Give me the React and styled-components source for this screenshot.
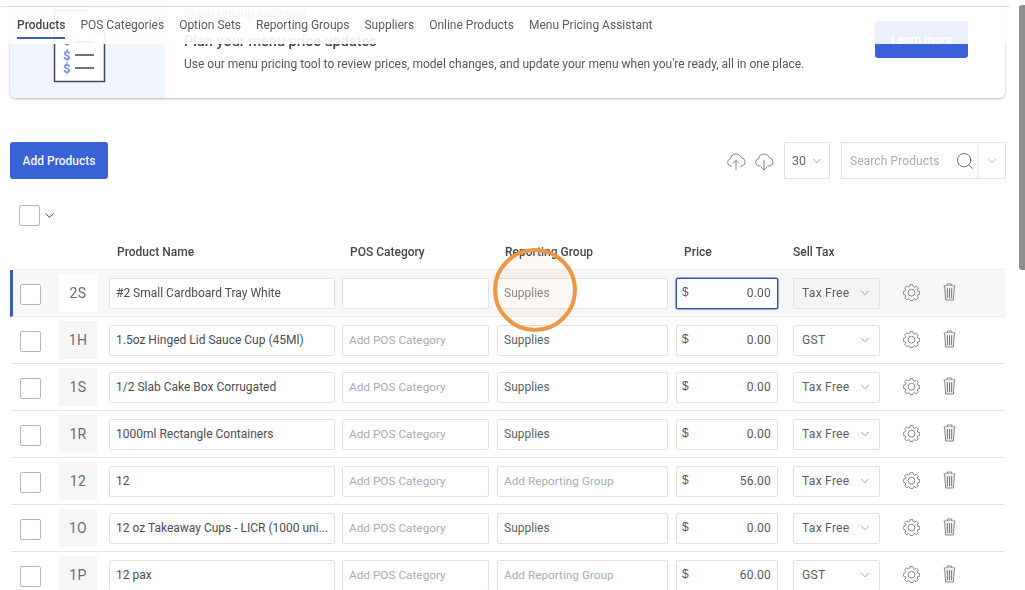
import styled, { createGlobalStyle } from "styled-components";
import { ChevronDown, Search } from "lucide-react";

const GlobalStyle = createGlobalStyle`
  html, body {
    margin: 0;
    padding: 0;
    background: #fff;
  }
  * {
    box-sizing: border-box;
  }
`;

const tabs = [
  "Products",
  "POS Categories",
  "Option Sets",
  "Reporting Groups",
  "Suppliers",
  "Online Products",
  "Menu Pricing Assistant",
];

const products = [
  { code: "2S", name: "#2 Small Cardboard Tray White", group: "Supplies", price: "0.00", tax: "Tax Free", active: true },
  { code: "1H", name: "1.5oz Hinged Lid Sauce Cup (45Ml)", group: "Supplies", price: "0.00", tax: "GST" },
  { code: "1S", name: "1/2 Slab Cake Box Corrugated", group: "Supplies", price: "0.00", tax: "Tax Free" },
  { code: "1R", name: "1000ml Rectangle Containers", group: "Supplies", price: "0.00", tax: "Tax Free" },
  { code: "12", name: "12", group: "", price: "56.00", tax: "Tax Free" },
  { code: "1O", name: "12 oz Takeaway Cups - LICR (1000 uni...", group: "Supplies", price: "0.00", tax: "Tax Free" },
  { code: "1P", name: "12 pax", group: "", price: "60.00", tax: "GST" },
];

const Page = styled.div`
  position: relative;
  width: 1025px;
  height: 590px;
  overflow: hidden;
  font-family: Roboto, "Liberation Sans", sans-serif;
  font-size: 12px;
  color: #4b4d52;
  filter: blur(0.3px);
`;

const TopLine = styled.div`
  height: 7px;
  width: 1010px;
  border-bottom: 1px solid #e4e4e4;
`;

const TabBar = styled.nav`
  position: absolute;
  top: 7px;
  left: 0;
  width: 1010px;
  height: 37px;
  padding-left: 17px;
  display: flex;
  gap: 15px;
  background: rgba(255, 255, 255, 0.9);
`;

const Tab = styled.a`
  height: 32px;
  line-height: 36px;
  white-space: nowrap;
  font-size: 12px;
  color: ${(p) => (p.$active ? "#44474d" : "#5a5c61")};
  font-weight: ${(p) => (p.$active ? 500 : 400)};
  border-bottom: 2px solid ${(p) => (p.$active ? "#3a5fb5" : "transparent")};
`;

const Banner = styled.section`
  margin-left: 10px;
  width: 995px;
  height: 91px;
  display: flex;
  border-radius: 0 0 6px 6px;
  background: #fff;
  box-shadow: 0 1px 3px rgba(0, 0, 0, 0.28);
  overflow: hidden;
`;

const BannerArt = styled.div`
  width: 155px;
  background: #f1f5fe;
  flex: none;
`;

const BannerText = styled.div`
  margin-left: 19px;
  width: 691px;
`;

const BannerKicker = styled.div`
  font-size: 12px;
  line-height: 14px;
  color: #9aa7c8;
  font-weight: 500;
`;

const BannerTitle = styled.div`
  margin-top: 11px;
  font-size: 14.5px;
  line-height: 20px;
  font-weight: 500;
  color: #3f4147;
`;

const BannerCopy = styled.div`
  margin-top: 4px;
  font-size: 12px;
  line-height: 16px;
  color: #55575c;
`;

const LearnButton = styled.button`
  margin-top: 14px;
  width: 93px;
  height: 37px;
  border: 0;
  border-radius: 3px;
  background: #3a62d7;
  color: #fff;
  font: 500 12px Roboto, sans-serif;
`;

const Toolbar = styled.div`
  margin: 44px 0 0 10px;
  width: 996px;
  height: 37px;
  display: flex;
  align-items: center;
`;

const AddButton = styled.button`
  width: 98px;
  height: 37px;
  border: 0;
  border-radius: 3px;
  background: #3a62d7;
  color: #f4f6fd;
  font: 500 12px Roboto, sans-serif;
`;

const ToolIcons = styled.div`
  margin-left: auto;
  display: flex;
  gap: 8px;
  color: #77797d;
`;

const PageSize = styled.div`
  margin-left: 10px;
  width: 46px;
  height: 37px;
  display: flex;
  align-items: center;
  padding-left: 7px;
  gap: 4px;
  border: 1px solid #e3e3e3;
  font-size: 12.5px;
  color: #66686c;
`;

const SearchBox = styled.div`
  margin-left: 11px;
  width: 165px;
  height: 37px;
  display: flex;
  border: 1px solid #e3e3e3;
`;

const SearchField = styled.div`
  flex: 1;
  display: flex;
  align-items: center;
  justify-content: space-between;
  padding: 0 2px 0 8px;
  color: #a9acb2;
  font-size: 12px;
  letter-spacing: 0.1px;
  border-right: 2px solid #efefef;
`;

const SearchCaret = styled.div`
  width: 26px;
  display: flex;
  align-items: center;
  justify-content: center;
  color: #77797d;
`;

const SelectAll = styled.div`
  margin: 26px 0 0 19px;
  display: flex;
  align-items: center;
  gap: 2px;
  color: #44474d;
`;

const CheckBox = styled.span`
  display: block;
  flex: none;
  width: 21px;
  height: 21px;
  margin-top: ${(p) => (p.$inRow ? 2 : 0)}px;
  background: #fff;
  border: 1px solid #b4b6b9;
  border-radius: 2px;
`;

const HeaderRow = styled.div`
  margin: 14px 0 0 10px;
  height: 30px;
  display: flex;
  line-height: 24px;
  font-size: 12px;
  font-weight: 500;
  color: #45474c;
`;

const HeaderCell = styled.div`
  width: ${(p) => p.$w}px;
  flex: none;
`;

const Row = styled.div`
  margin-left: 10px;
  width: 995px;
  height: 47px;
  display: flex;
  align-items: center;
  padding-left: 7px;
  border-left: 3px solid ${(p) => (p.$active ? "#3a5fb5" : "transparent")};
  border-bottom: 1px solid ${(p) => (p.$active ? "#ececec" : "#e2e2e2")};
  background: ${(p) => (p.$active ? "#f7f7f7" : "#fff")};
  box-shadow: ${(p) => (p.$active ? "0 -1px 0 #f0f0f0" : "none")};
`;

const CodeBox = styled.div`
  margin-left: 18px;
  width: 38px;
  height: 38px;
  flex: none;
  display: flex;
  align-items: center;
  justify-content: center;
  font-size: 14px;
  letter-spacing: 0.3px;
  color: #6a6c70;
  background: ${(p) => (p.$active ? "#fff" : "#f6f6f6")};
`;

const TextField = styled.input`
  width: ${(p) => p.$w}px;
  margin-left: ${(p) => p.$gap}px;
  height: 31px;
  flex: none;
  padding: 0 6px;
  background: #fff;
  border: 1px solid #e2e2e2;
  border-radius: 2px;
  outline: none;
  font: 12px Roboto, sans-serif;
  color: ${(p) => p.$tone || "#4b4d52"};
  &::placeholder {
    color: #a9acb2;
    font-size: 11.8px;
    opacity: 1;
  }
`;

const PriceField = styled.div`
  margin-left: 8px;
  width: 102px;
  height: 31px;
  flex: none;
  display: flex;
  align-items: center;
  justify-content: space-between;
  padding: 0 6px 0 5px;
  background: #fff;
  border: 1px solid ${(p) => (p.$active ? "#32589f" : "#e2e2e2")};
  box-shadow: ${(p) => (p.$active ? "0 0 0 0.5px #32589f" : "none")};
  border-radius: 2px;
  font-size: 12px;
  letter-spacing: 0.2px;
  color: #55575c;
`;

const Dollar = styled.span`
  font-family: "Liberation Sans", sans-serif;
  font-size: 12px;
  margin-top: -3px;
`;

const TaxSelect = styled.div`
  margin-left: 15px;
  width: 87px;
  height: 31px;
  flex: none;
  display: flex;
  align-items: center;
  justify-content: space-between;
  padding: 0 7px 1px 8px;
  border: 1px solid #e2e2e2;
  border-radius: 2px;
  background: ${(p) => (p.$active ? "#f4f4f4" : "#fff")};
  font-size: 12.2px;
  letter-spacing: 0.2px;
  color: #5d5f63;
`;

const RowIcons = styled.div`
  margin: 0 0 2px 23px;
  display: flex;
  align-items: center;
  gap: 23px;
  color: #77797d;
`;

const Highlight = styled.div`
  position: absolute;
  left: 493px;
  top: 248px;
  width: 84px;
  height: 84px;
  border-radius: 50%;
  border: 4px solid #ee9646;
  background: rgba(240, 150, 70, 0.06);
`;

const Scrollbar = styled.div`
  position: absolute;
  right: 0;
  top: 5px;
  width: 6px;
  height: 265px;
  border-radius: 3px 0 0 3px;
  background: #8e8e8e;
`;

const MenuArt = () => (
  <svg width="155" height="91" viewBox="0 0 155 91">
    <rect x="44.5" y="3.5" width="50" height="71" fill="#fff" stroke="#46484c" strokeWidth="1.5" />
    <rect x="77.5" y="0.5" width="33" height="25" fill="#fff" stroke="#c9ccd2" />
    <path d="M65 35h19M65 48h19M65 61h19" stroke="#44464a" strokeWidth="1.6" />
    <text x="53" y="38" fontSize="13" fontWeight="700" fill="#6f8ede" fontFamily="Roboto">$</text>
    <text x="53" y="53" fontSize="13" fontWeight="700" fill="#6f8ede" fontFamily="Roboto">$</text>
    <text x="53" y="66" fontSize="13" fontWeight="700" fill="#6f8ede" fontFamily="Roboto">$</text>
  </svg>
);

const CloudUp = () => (
  <svg width="20" height="20" viewBox="0 0 20 20" fill="none" stroke="currentColor" strokeWidth="0.9">
    <path d="M6 15H5a3.6 3.6 0 0 1-.6-7.1A5.6 5.6 0 0 1 15.2 6.6 4.3 4.3 0 0 1 16 15h-2" />
    <path d="M10 19V9.5M6.8 12.5 10 9.3l3.2 3.2" />
  </svg>
);

const CloudDown = () => (
  <svg width="20" height="20" viewBox="0 0 20 20" fill="none" stroke="currentColor" strokeWidth="0.9">
    <path d="M6.5 15H5a3.6 3.6 0 0 1-.6-7.1A5.6 5.6 0 0 1 15.2 6.6 4.3 4.3 0 0 1 16 15h-2.5" />
    <path d="M10 9v10M6.8 15.8 10 19l3.2-3.2" />
  </svg>
);

const GearIcon = () => (
  <svg width="17" height="17" viewBox="0 0 19 19" fill="none" stroke="currentColor" strokeWidth="1">
    <path d="M7.9 1.2h3.2l.5 2.2 1.3.6 2-1.2 2.2 2.3-1.2 1.9.6 1.4 2.2.5v3.1l-2.2.5-.6 1.4 1.2 1.9-2.2 2.2-2-1.2-1.3.6-.5 1.4H7.9l-.5-1.4-1.3-.6-2 1.2-2.2-2.2 1.2-1.9-.6-1.4L.3 11.7V8.6l2.2-.5.6-1.4-1.2-1.9 2.2-2.3 2 1.2 1.3-.6z" transform="translate(0 -.4)" />
    <circle cx="9.5" cy="9.7" r="3.8" />
  </svg>
);

const TrashIcon = () => (
  <svg width="13" height="18" viewBox="0 0 13 18" fill="none" stroke="currentColor" strokeWidth="0.9">
    <path d="M.5 3h12M4.2 3V1h4.6v2" />
    <path d="M1.6 3l1 14h7.8l1-14" fill="#efefef" />
    <path d="M4.4 5.2v10M6.5 5.2v10M8.6 5.2v10" strokeWidth="1" />
  </svg>
);

const ProductRow = ({ item }) => (
  <Row $active={item.active}>
    <CheckBox $inRow />
    <CodeBox $active={item.active}>{item.code}</CodeBox>
    <TextField $w={226} $gap={12} readOnly value={item.name} />
    <TextField $w={147} $gap={7} readOnly placeholder={item.active ? "" : "Add POS Category"} value="" />
    <TextField
      $w={171}
      $gap={8}
      $tone={item.active ? "#85878b" : "#5d5f63"}
      readOnly
      placeholder="Add Reporting Group"
      value={item.group}
    />
    <PriceField $active={item.active}>
      <Dollar>$</Dollar>
      {item.price}
    </PriceField>
    <TaxSelect $active={item.active}>
      {item.tax}
      <ChevronDown size={14} strokeWidth={1} />
    </TaxSelect>
    <RowIcons>
      <GearIcon />
      <TrashIcon />
    </RowIcons>
  </Row>
);

export default function App() {
  return (
    <Page>
      <GlobalStyle />
      <TopLine />
      <Banner>
        <BannerArt>
          <MenuArt />
        </BannerArt>
        <BannerText>
          <BannerKicker>Menu pricing assistant</BannerKicker>
          <BannerTitle>Plan your menu price updates</BannerTitle>
          <BannerCopy>
            Use our menu pricing tool to review prices, model changes, and update your menu when you're ready, all in one place.
          </BannerCopy>
        </BannerText>
        <LearnButton>Learn more</LearnButton>
      </Banner>
      <TabBar>
        {tabs.map((tab, i) => (
          <Tab key={tab} $active={i === 0}>
            {tab}
          </Tab>
        ))}
      </TabBar>
      <Toolbar>
        <AddButton>Add Products</AddButton>
        <ToolIcons>
          <CloudUp />
          <CloudDown />
        </ToolIcons>
        <PageSize>
          30
          <ChevronDown size={14} strokeWidth={1} />
        </PageSize>
        <SearchBox>
          <SearchField>
            Search Products
            <Search size={20} strokeWidth={1} color="#55575b" />
          </SearchField>
          <SearchCaret>
            <ChevronDown size={14} strokeWidth={1} />
          </SearchCaret>
        </SearchBox>
      </Toolbar>
      <SelectAll>
        <CheckBox />
        <ChevronDown size={15} strokeWidth={1.6} />
      </SelectAll>
      <HeaderRow>
        <HeaderCell $w={107} />
        <HeaderCell $w={233}>Product Name</HeaderCell>
        <HeaderCell $w={155}>POS Category</HeaderCell>
        <HeaderCell $w={179}>Reporting Group</HeaderCell>
        <HeaderCell $w={109}>Price</HeaderCell>
        <HeaderCell $w={80}>Sell Tax</HeaderCell>
      </HeaderRow>
      {products.map((item) => (
        <ProductRow key={item.code} item={item} />
      ))}
      <Highlight />
      <Scrollbar />
    </Page>
  );
}
